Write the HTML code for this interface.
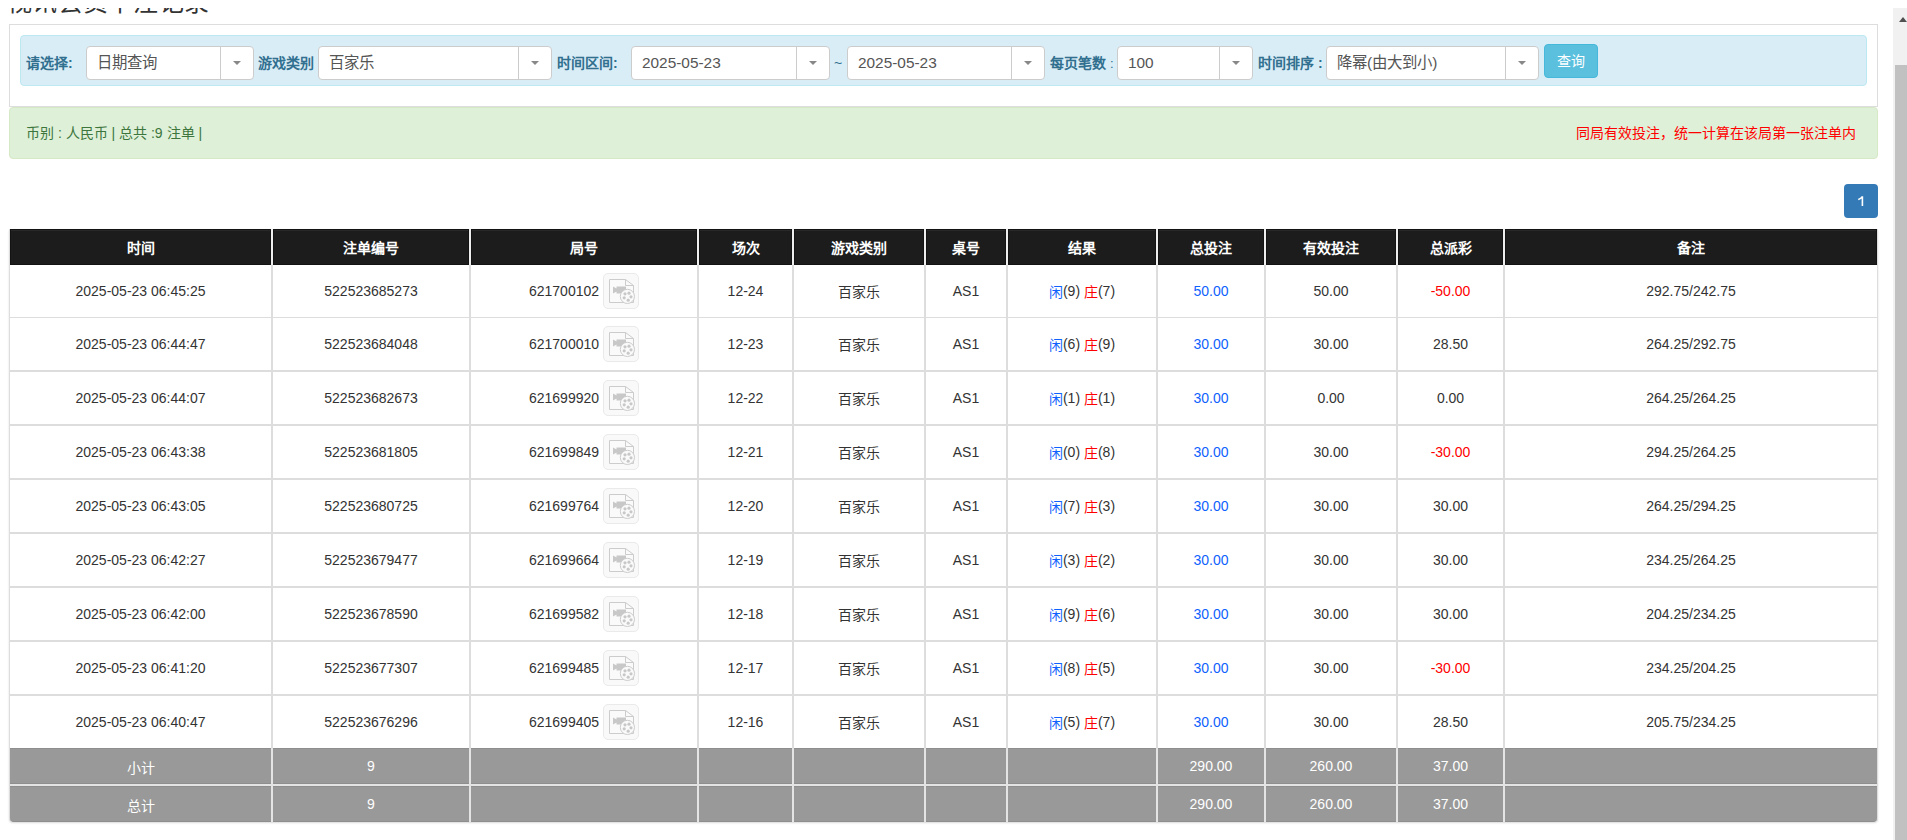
<!DOCTYPE html><html lang="zh-CN"><head><meta charset="utf-8"><style>
*{box-sizing:border-box;margin:0;padding:0}
html,body{width:1907px;height:840px;overflow:hidden;background:#fff}
body{position:relative;font-family:"Liberation Sans",sans-serif;font-size:14px;color:#333}
.a{position:absolute;white-space:nowrap}
.sel{position:absolute;top:46px;height:34px;background:#fff;border:1px solid #ccc;border-radius:4px}
.sel .dv{position:absolute;top:0;bottom:0;width:1px;background:#ccc}
.sel .ct{position:absolute;top:14px;width:0;height:0;border-left:4px solid transparent;border-right:4px solid transparent;border-top:4px solid #888}
.sel .tx{position:absolute;left:10px;top:0;line-height:32px;font-size:15.4px;color:#555}
.lb{position:absolute;top:46px;line-height:34px;font-weight:bold;color:#31708f;font-size:14px}
.th{position:absolute;top:229px;height:36px;background:#1c1c1c;border:1px solid #131313;box-shadow:inset 0 1px 0 #282828;color:#fff;font-weight:bold;display:flex;align-items:center;justify-content:center}
.td{position:absolute;display:flex;align-items:center;justify-content:center;color:#333}
.ft{position:absolute;height:36px;background:#999;border-top:1px solid #8e8e8e;border-bottom:1px solid #8e8e8e;color:#fff;display:flex;align-items:center;justify-content:center}
.ic{display:inline-block;width:36px;height:36px;margin-left:4px;border:1px solid #eaeaea;border-radius:5px;background:#f9f9f9;position:relative}
.ic svg{position:absolute;left:-1px;top:-1px}
.bl{color:#0f62fe}.rd{color:#f00}
</style></head><body>
<div class="a" style="left:7px;top:-15px;font-size:25px;letter-spacing:0.3px;line-height:34px;color:#333">视讯会员下注记录</div>
<div class="a" style="left:9px;top:24px;width:1869px;height:83px;border:1px solid #ddd"></div>
<div class="a" style="left:20px;top:35px;width:1847px;height:51px;background:#d9edf7;border:1px solid #bce8f1;border-radius:4px"></div>
<div class="lb" style="left:26px">请选择:</div>
<div class="lb" style="left:258px">游戏类别</div>
<div class="lb" style="left:557px">时间区间:</div>
<div class="lb" style="left:1050px">每页笔数 <span style="font-weight:normal;font-size:13px">:</span></div>
<div class="lb" style="left:1258px">时间排序 :</div>
<div class="lb" style="left:834px;font-weight:normal">~</div>
<div class="sel" style="left:86px;width:168px"><div class="tx">日期查询</div><div class="dv" style="left:133px"></div><div class="ct" style="left:146.0px"></div></div>
<div class="sel" style="left:318px;width:234px"><div class="tx">百家乐</div><div class="dv" style="left:199px"></div><div class="ct" style="left:212.0px"></div></div>
<div class="sel" style="left:631px;width:199px"><div class="tx">2025-05-23</div><div class="dv" style="left:164px"></div><div class="ct" style="left:177.0px"></div></div>
<div class="sel" style="left:847px;width:198px"><div class="tx">2025-05-23</div><div class="dv" style="left:163px"></div><div class="ct" style="left:176.0px"></div></div>
<div class="sel" style="left:1117px;width:136px"><div class="tx">100</div><div class="dv" style="left:101px"></div><div class="ct" style="left:114.0px"></div></div>
<div class="sel" style="left:1326px;width:213px"><div class="tx">降幂(由大到小)</div><div class="dv" style="left:178px"></div><div class="ct" style="left:191.0px"></div></div>
<div class="a" style="left:1544px;top:44px;width:54px;height:34px;background:#5bc0de;border:1px solid #46b8da;border-radius:4px;color:#fff;font-size:14px;line-height:32px;text-align:center">查询</div>
<div class="a" style="left:9px;top:107px;width:1869px;height:52px;background:#dff0d8;border:1px solid #d6e9c6;border-radius:4px"></div>
<div class="a" style="left:26px;top:107px;line-height:52px;color:#3c763d">币别 : 人民币 | 总共 :9 注单 |</div>
<div class="a" style="right:51px;top:107px;line-height:52px;color:#f00">同局有效投注，统一计算在该局第一张注单内</div>
<div class="a" style="left:1844px;top:184px;width:34px;height:34px;background:#337ab7;border-radius:4px"><svg width="34" height="34" style="position:absolute;left:0;top:0"><path d="M17.6 12.2H19.2V22H17.6V14.6Q16.4 15.6 14.2 16.2V14.8Q16.6 14 17.6 12.2Z" fill="#fff"/></svg></div>
<div class="a" style="left:9px;top:229px;width:1869px;height:593px;background:#ddd;box-shadow:0 1px 2px rgba(0,0,0,.15);border-radius:0 0 4px 4px"></div>
<div class="a" style="left:10px;top:229px;width:1867px;height:36px;background:#eee"></div>
<div class="th" style="left:10px;width:261px">时间</div>
<div class="th" style="left:273px;width:196px">注单编号</div>
<div class="th" style="left:471px;width:226px">局号</div>
<div class="th" style="left:699px;width:93px">场次</div>
<div class="th" style="left:794px;width:130px">游戏类别</div>
<div class="th" style="left:926px;width:80px">桌号</div>
<div class="th" style="left:1008px;width:148px">结果</div>
<div class="th" style="left:1158px;width:106px">总投注</div>
<div class="th" style="left:1266px;width:130px">有效投注</div>
<div class="th" style="left:1398px;width:105px">总派彩</div>
<div class="th" style="left:1505px;width:372px">备注</div>
<div class="td" style="left:10px;top:265px;width:261px;height:52px;background:#fff">2025-05-23 06:45:25</div>
<div class="td" style="left:273px;top:265px;width:196px;height:52px;background:#fff">522523685273</div>
<div class="td" style="left:471px;top:265px;width:226px;height:52px;background:#fff">621700102<span class="ic"><svg width="36" height="36" viewBox="0 0 36 36"><path d="M6.5 6.5H22.5L30.5 12.5V29.5H6.5Z" fill="#fafafa" stroke="#ccc" stroke-width="1"/><path d="M22.5 6.5V12.5H30.5" fill="none" stroke="#ccc" stroke-width="1"/><path d="M10 13.5L13.5 15.5V13.5H23V20.5H13.5V18.5L10 20.5Z" fill="#c8c8c8"/><circle cx="24.4" cy="23.4" r="7.1" fill="#fafafa" stroke="#ccc" stroke-width="1"/><circle cx="22" cy="20.8" r="1.6" fill="#c8c8c8"/><circle cx="26" cy="20.2" r="1.6" fill="#c8c8c8"/><circle cx="28" cy="23.8" r="1.6" fill="#c8c8c8"/><circle cx="25.2" cy="27.2" r="1.6" fill="#c8c8c8"/><circle cx="21.2" cy="24.8" r="1.6" fill="#c8c8c8"/></svg></span></div>
<div class="td" style="left:699px;top:265px;width:93px;height:52px;background:#fff">12-24</div>
<div class="td" style="left:794px;top:265px;width:130px;height:52px;background:#fff"><span style="position:relative;top:-0.5px">百家乐</span></div>
<div class="td" style="left:926px;top:265px;width:80px;height:52px;background:#fff">AS1</div>
<div class="td" style="left:1008px;top:265px;width:148px;height:52px;background:#fff"><span class="bl">闲</span>(9)&nbsp;<span class="rd">庄</span>(7)</div>
<div class="td" style="left:1158px;top:265px;width:106px;height:52px;background:#fff"><span class="bl">50.00</span></div>
<div class="td" style="left:1266px;top:265px;width:130px;height:52px;background:#fff">50.00</div>
<div class="td" style="left:1398px;top:265px;width:105px;height:52px;background:#fff"><span class="rd">-50.00</span></div>
<div class="td" style="left:1505px;top:265px;width:372px;height:52px;background:#fff">292.75/242.75</div>
<div class="td" style="left:10px;top:318px;width:261px;height:52px;background:#fff">2025-05-23 06:44:47</div>
<div class="td" style="left:273px;top:318px;width:196px;height:52px;background:#fff">522523684048</div>
<div class="td" style="left:471px;top:318px;width:226px;height:52px;background:#fff">621700010<span class="ic"><svg width="36" height="36" viewBox="0 0 36 36"><path d="M6.5 6.5H22.5L30.5 12.5V29.5H6.5Z" fill="#fafafa" stroke="#ccc" stroke-width="1"/><path d="M22.5 6.5V12.5H30.5" fill="none" stroke="#ccc" stroke-width="1"/><path d="M10 13.5L13.5 15.5V13.5H23V20.5H13.5V18.5L10 20.5Z" fill="#c8c8c8"/><circle cx="24.4" cy="23.4" r="7.1" fill="#fafafa" stroke="#ccc" stroke-width="1"/><circle cx="22" cy="20.8" r="1.6" fill="#c8c8c8"/><circle cx="26" cy="20.2" r="1.6" fill="#c8c8c8"/><circle cx="28" cy="23.8" r="1.6" fill="#c8c8c8"/><circle cx="25.2" cy="27.2" r="1.6" fill="#c8c8c8"/><circle cx="21.2" cy="24.8" r="1.6" fill="#c8c8c8"/></svg></span></div>
<div class="td" style="left:699px;top:318px;width:93px;height:52px;background:#fff">12-23</div>
<div class="td" style="left:794px;top:318px;width:130px;height:52px;background:#fff"><span style="position:relative;top:-0.5px">百家乐</span></div>
<div class="td" style="left:926px;top:318px;width:80px;height:52px;background:#fff">AS1</div>
<div class="td" style="left:1008px;top:318px;width:148px;height:52px;background:#fff"><span class="bl">闲</span>(6)&nbsp;<span class="rd">庄</span>(9)</div>
<div class="td" style="left:1158px;top:318px;width:106px;height:52px;background:#fff"><span class="bl">30.00</span></div>
<div class="td" style="left:1266px;top:318px;width:130px;height:52px;background:#fff">30.00</div>
<div class="td" style="left:1398px;top:318px;width:105px;height:52px;background:#fff"><span>28.50</span></div>
<div class="td" style="left:1505px;top:318px;width:372px;height:52px;background:#fff">264.25/292.75</div>
<div class="td" style="left:10px;top:372px;width:261px;height:52px;background:#fff">2025-05-23 06:44:07</div>
<div class="td" style="left:273px;top:372px;width:196px;height:52px;background:#fff">522523682673</div>
<div class="td" style="left:471px;top:372px;width:226px;height:52px;background:#fff">621699920<span class="ic"><svg width="36" height="36" viewBox="0 0 36 36"><path d="M6.5 6.5H22.5L30.5 12.5V29.5H6.5Z" fill="#fafafa" stroke="#ccc" stroke-width="1"/><path d="M22.5 6.5V12.5H30.5" fill="none" stroke="#ccc" stroke-width="1"/><path d="M10 13.5L13.5 15.5V13.5H23V20.5H13.5V18.5L10 20.5Z" fill="#c8c8c8"/><circle cx="24.4" cy="23.4" r="7.1" fill="#fafafa" stroke="#ccc" stroke-width="1"/><circle cx="22" cy="20.8" r="1.6" fill="#c8c8c8"/><circle cx="26" cy="20.2" r="1.6" fill="#c8c8c8"/><circle cx="28" cy="23.8" r="1.6" fill="#c8c8c8"/><circle cx="25.2" cy="27.2" r="1.6" fill="#c8c8c8"/><circle cx="21.2" cy="24.8" r="1.6" fill="#c8c8c8"/></svg></span></div>
<div class="td" style="left:699px;top:372px;width:93px;height:52px;background:#fff">12-22</div>
<div class="td" style="left:794px;top:372px;width:130px;height:52px;background:#fff"><span style="position:relative;top:-0.5px">百家乐</span></div>
<div class="td" style="left:926px;top:372px;width:80px;height:52px;background:#fff">AS1</div>
<div class="td" style="left:1008px;top:372px;width:148px;height:52px;background:#fff"><span class="bl">闲</span>(1)&nbsp;<span class="rd">庄</span>(1)</div>
<div class="td" style="left:1158px;top:372px;width:106px;height:52px;background:#fff"><span class="bl">30.00</span></div>
<div class="td" style="left:1266px;top:372px;width:130px;height:52px;background:#fff">0.00</div>
<div class="td" style="left:1398px;top:372px;width:105px;height:52px;background:#fff"><span>0.00</span></div>
<div class="td" style="left:1505px;top:372px;width:372px;height:52px;background:#fff">264.25/264.25</div>
<div class="td" style="left:10px;top:426px;width:261px;height:52px;background:#fff">2025-05-23 06:43:38</div>
<div class="td" style="left:273px;top:426px;width:196px;height:52px;background:#fff">522523681805</div>
<div class="td" style="left:471px;top:426px;width:226px;height:52px;background:#fff">621699849<span class="ic"><svg width="36" height="36" viewBox="0 0 36 36"><path d="M6.5 6.5H22.5L30.5 12.5V29.5H6.5Z" fill="#fafafa" stroke="#ccc" stroke-width="1"/><path d="M22.5 6.5V12.5H30.5" fill="none" stroke="#ccc" stroke-width="1"/><path d="M10 13.5L13.5 15.5V13.5H23V20.5H13.5V18.5L10 20.5Z" fill="#c8c8c8"/><circle cx="24.4" cy="23.4" r="7.1" fill="#fafafa" stroke="#ccc" stroke-width="1"/><circle cx="22" cy="20.8" r="1.6" fill="#c8c8c8"/><circle cx="26" cy="20.2" r="1.6" fill="#c8c8c8"/><circle cx="28" cy="23.8" r="1.6" fill="#c8c8c8"/><circle cx="25.2" cy="27.2" r="1.6" fill="#c8c8c8"/><circle cx="21.2" cy="24.8" r="1.6" fill="#c8c8c8"/></svg></span></div>
<div class="td" style="left:699px;top:426px;width:93px;height:52px;background:#fff">12-21</div>
<div class="td" style="left:794px;top:426px;width:130px;height:52px;background:#fff"><span style="position:relative;top:-0.5px">百家乐</span></div>
<div class="td" style="left:926px;top:426px;width:80px;height:52px;background:#fff">AS1</div>
<div class="td" style="left:1008px;top:426px;width:148px;height:52px;background:#fff"><span class="bl">闲</span>(0)&nbsp;<span class="rd">庄</span>(8)</div>
<div class="td" style="left:1158px;top:426px;width:106px;height:52px;background:#fff"><span class="bl">30.00</span></div>
<div class="td" style="left:1266px;top:426px;width:130px;height:52px;background:#fff">30.00</div>
<div class="td" style="left:1398px;top:426px;width:105px;height:52px;background:#fff"><span class="rd">-30.00</span></div>
<div class="td" style="left:1505px;top:426px;width:372px;height:52px;background:#fff">294.25/264.25</div>
<div class="td" style="left:10px;top:480px;width:261px;height:52px;background:#fff">2025-05-23 06:43:05</div>
<div class="td" style="left:273px;top:480px;width:196px;height:52px;background:#fff">522523680725</div>
<div class="td" style="left:471px;top:480px;width:226px;height:52px;background:#fff">621699764<span class="ic"><svg width="36" height="36" viewBox="0 0 36 36"><path d="M6.5 6.5H22.5L30.5 12.5V29.5H6.5Z" fill="#fafafa" stroke="#ccc" stroke-width="1"/><path d="M22.5 6.5V12.5H30.5" fill="none" stroke="#ccc" stroke-width="1"/><path d="M10 13.5L13.5 15.5V13.5H23V20.5H13.5V18.5L10 20.5Z" fill="#c8c8c8"/><circle cx="24.4" cy="23.4" r="7.1" fill="#fafafa" stroke="#ccc" stroke-width="1"/><circle cx="22" cy="20.8" r="1.6" fill="#c8c8c8"/><circle cx="26" cy="20.2" r="1.6" fill="#c8c8c8"/><circle cx="28" cy="23.8" r="1.6" fill="#c8c8c8"/><circle cx="25.2" cy="27.2" r="1.6" fill="#c8c8c8"/><circle cx="21.2" cy="24.8" r="1.6" fill="#c8c8c8"/></svg></span></div>
<div class="td" style="left:699px;top:480px;width:93px;height:52px;background:#fff">12-20</div>
<div class="td" style="left:794px;top:480px;width:130px;height:52px;background:#fff"><span style="position:relative;top:-0.5px">百家乐</span></div>
<div class="td" style="left:926px;top:480px;width:80px;height:52px;background:#fff">AS1</div>
<div class="td" style="left:1008px;top:480px;width:148px;height:52px;background:#fff"><span class="bl">闲</span>(7)&nbsp;<span class="rd">庄</span>(3)</div>
<div class="td" style="left:1158px;top:480px;width:106px;height:52px;background:#fff"><span class="bl">30.00</span></div>
<div class="td" style="left:1266px;top:480px;width:130px;height:52px;background:#fff">30.00</div>
<div class="td" style="left:1398px;top:480px;width:105px;height:52px;background:#fff"><span>30.00</span></div>
<div class="td" style="left:1505px;top:480px;width:372px;height:52px;background:#fff">264.25/294.25</div>
<div class="td" style="left:10px;top:534px;width:261px;height:52px;background:#fff">2025-05-23 06:42:27</div>
<div class="td" style="left:273px;top:534px;width:196px;height:52px;background:#fff">522523679477</div>
<div class="td" style="left:471px;top:534px;width:226px;height:52px;background:#fff">621699664<span class="ic"><svg width="36" height="36" viewBox="0 0 36 36"><path d="M6.5 6.5H22.5L30.5 12.5V29.5H6.5Z" fill="#fafafa" stroke="#ccc" stroke-width="1"/><path d="M22.5 6.5V12.5H30.5" fill="none" stroke="#ccc" stroke-width="1"/><path d="M10 13.5L13.5 15.5V13.5H23V20.5H13.5V18.5L10 20.5Z" fill="#c8c8c8"/><circle cx="24.4" cy="23.4" r="7.1" fill="#fafafa" stroke="#ccc" stroke-width="1"/><circle cx="22" cy="20.8" r="1.6" fill="#c8c8c8"/><circle cx="26" cy="20.2" r="1.6" fill="#c8c8c8"/><circle cx="28" cy="23.8" r="1.6" fill="#c8c8c8"/><circle cx="25.2" cy="27.2" r="1.6" fill="#c8c8c8"/><circle cx="21.2" cy="24.8" r="1.6" fill="#c8c8c8"/></svg></span></div>
<div class="td" style="left:699px;top:534px;width:93px;height:52px;background:#fff">12-19</div>
<div class="td" style="left:794px;top:534px;width:130px;height:52px;background:#fff"><span style="position:relative;top:-0.5px">百家乐</span></div>
<div class="td" style="left:926px;top:534px;width:80px;height:52px;background:#fff">AS1</div>
<div class="td" style="left:1008px;top:534px;width:148px;height:52px;background:#fff"><span class="bl">闲</span>(3)&nbsp;<span class="rd">庄</span>(2)</div>
<div class="td" style="left:1158px;top:534px;width:106px;height:52px;background:#fff"><span class="bl">30.00</span></div>
<div class="td" style="left:1266px;top:534px;width:130px;height:52px;background:#fff">30.00</div>
<div class="td" style="left:1398px;top:534px;width:105px;height:52px;background:#fff"><span>30.00</span></div>
<div class="td" style="left:1505px;top:534px;width:372px;height:52px;background:#fff">234.25/264.25</div>
<div class="td" style="left:10px;top:588px;width:261px;height:52px;background:#fff">2025-05-23 06:42:00</div>
<div class="td" style="left:273px;top:588px;width:196px;height:52px;background:#fff">522523678590</div>
<div class="td" style="left:471px;top:588px;width:226px;height:52px;background:#fff">621699582<span class="ic"><svg width="36" height="36" viewBox="0 0 36 36"><path d="M6.5 6.5H22.5L30.5 12.5V29.5H6.5Z" fill="#fafafa" stroke="#ccc" stroke-width="1"/><path d="M22.5 6.5V12.5H30.5" fill="none" stroke="#ccc" stroke-width="1"/><path d="M10 13.5L13.5 15.5V13.5H23V20.5H13.5V18.5L10 20.5Z" fill="#c8c8c8"/><circle cx="24.4" cy="23.4" r="7.1" fill="#fafafa" stroke="#ccc" stroke-width="1"/><circle cx="22" cy="20.8" r="1.6" fill="#c8c8c8"/><circle cx="26" cy="20.2" r="1.6" fill="#c8c8c8"/><circle cx="28" cy="23.8" r="1.6" fill="#c8c8c8"/><circle cx="25.2" cy="27.2" r="1.6" fill="#c8c8c8"/><circle cx="21.2" cy="24.8" r="1.6" fill="#c8c8c8"/></svg></span></div>
<div class="td" style="left:699px;top:588px;width:93px;height:52px;background:#fff">12-18</div>
<div class="td" style="left:794px;top:588px;width:130px;height:52px;background:#fff"><span style="position:relative;top:-0.5px">百家乐</span></div>
<div class="td" style="left:926px;top:588px;width:80px;height:52px;background:#fff">AS1</div>
<div class="td" style="left:1008px;top:588px;width:148px;height:52px;background:#fff"><span class="bl">闲</span>(9)&nbsp;<span class="rd">庄</span>(6)</div>
<div class="td" style="left:1158px;top:588px;width:106px;height:52px;background:#fff"><span class="bl">30.00</span></div>
<div class="td" style="left:1266px;top:588px;width:130px;height:52px;background:#fff">30.00</div>
<div class="td" style="left:1398px;top:588px;width:105px;height:52px;background:#fff"><span>30.00</span></div>
<div class="td" style="left:1505px;top:588px;width:372px;height:52px;background:#fff">204.25/234.25</div>
<div class="td" style="left:10px;top:642px;width:261px;height:52px;background:#fff">2025-05-23 06:41:20</div>
<div class="td" style="left:273px;top:642px;width:196px;height:52px;background:#fff">522523677307</div>
<div class="td" style="left:471px;top:642px;width:226px;height:52px;background:#fff">621699485<span class="ic"><svg width="36" height="36" viewBox="0 0 36 36"><path d="M6.5 6.5H22.5L30.5 12.5V29.5H6.5Z" fill="#fafafa" stroke="#ccc" stroke-width="1"/><path d="M22.5 6.5V12.5H30.5" fill="none" stroke="#ccc" stroke-width="1"/><path d="M10 13.5L13.5 15.5V13.5H23V20.5H13.5V18.5L10 20.5Z" fill="#c8c8c8"/><circle cx="24.4" cy="23.4" r="7.1" fill="#fafafa" stroke="#ccc" stroke-width="1"/><circle cx="22" cy="20.8" r="1.6" fill="#c8c8c8"/><circle cx="26" cy="20.2" r="1.6" fill="#c8c8c8"/><circle cx="28" cy="23.8" r="1.6" fill="#c8c8c8"/><circle cx="25.2" cy="27.2" r="1.6" fill="#c8c8c8"/><circle cx="21.2" cy="24.8" r="1.6" fill="#c8c8c8"/></svg></span></div>
<div class="td" style="left:699px;top:642px;width:93px;height:52px;background:#fff">12-17</div>
<div class="td" style="left:794px;top:642px;width:130px;height:52px;background:#fff"><span style="position:relative;top:-0.5px">百家乐</span></div>
<div class="td" style="left:926px;top:642px;width:80px;height:52px;background:#fff">AS1</div>
<div class="td" style="left:1008px;top:642px;width:148px;height:52px;background:#fff"><span class="bl">闲</span>(8)&nbsp;<span class="rd">庄</span>(5)</div>
<div class="td" style="left:1158px;top:642px;width:106px;height:52px;background:#fff"><span class="bl">30.00</span></div>
<div class="td" style="left:1266px;top:642px;width:130px;height:52px;background:#fff">30.00</div>
<div class="td" style="left:1398px;top:642px;width:105px;height:52px;background:#fff"><span class="rd">-30.00</span></div>
<div class="td" style="left:1505px;top:642px;width:372px;height:52px;background:#fff">234.25/204.25</div>
<div class="td" style="left:10px;top:696px;width:261px;height:52px;background:#fff">2025-05-23 06:40:47</div>
<div class="td" style="left:273px;top:696px;width:196px;height:52px;background:#fff">522523676296</div>
<div class="td" style="left:471px;top:696px;width:226px;height:52px;background:#fff">621699405<span class="ic"><svg width="36" height="36" viewBox="0 0 36 36"><path d="M6.5 6.5H22.5L30.5 12.5V29.5H6.5Z" fill="#fafafa" stroke="#ccc" stroke-width="1"/><path d="M22.5 6.5V12.5H30.5" fill="none" stroke="#ccc" stroke-width="1"/><path d="M10 13.5L13.5 15.5V13.5H23V20.5H13.5V18.5L10 20.5Z" fill="#c8c8c8"/><circle cx="24.4" cy="23.4" r="7.1" fill="#fafafa" stroke="#ccc" stroke-width="1"/><circle cx="22" cy="20.8" r="1.6" fill="#c8c8c8"/><circle cx="26" cy="20.2" r="1.6" fill="#c8c8c8"/><circle cx="28" cy="23.8" r="1.6" fill="#c8c8c8"/><circle cx="25.2" cy="27.2" r="1.6" fill="#c8c8c8"/><circle cx="21.2" cy="24.8" r="1.6" fill="#c8c8c8"/></svg></span></div>
<div class="td" style="left:699px;top:696px;width:93px;height:52px;background:#fff">12-16</div>
<div class="td" style="left:794px;top:696px;width:130px;height:52px;background:#fff"><span style="position:relative;top:-0.5px">百家乐</span></div>
<div class="td" style="left:926px;top:696px;width:80px;height:52px;background:#fff">AS1</div>
<div class="td" style="left:1008px;top:696px;width:148px;height:52px;background:#fff"><span class="bl">闲</span>(5)&nbsp;<span class="rd">庄</span>(7)</div>
<div class="td" style="left:1158px;top:696px;width:106px;height:52px;background:#fff"><span class="bl">30.00</span></div>
<div class="td" style="left:1266px;top:696px;width:130px;height:52px;background:#fff">30.00</div>
<div class="td" style="left:1398px;top:696px;width:105px;height:52px;background:#fff"><span>28.50</span></div>
<div class="td" style="left:1505px;top:696px;width:372px;height:52px;background:#fff">205.75/234.25</div>
<div class="a" style="left:10px;top:748px;width:1867px;height:74px;background:#e4e4e4;border-radius:0 0 4px 4px"></div>
<div class="ft" style="left:10px;top:748px;width:261px;"><span style="position:relative;top:1px">小计</span></div>
<div class="ft" style="left:273px;top:748px;width:196px;">9</div>
<div class="ft" style="left:471px;top:748px;width:226px;"></div>
<div class="ft" style="left:699px;top:748px;width:93px;"></div>
<div class="ft" style="left:794px;top:748px;width:130px;"></div>
<div class="ft" style="left:926px;top:748px;width:80px;"></div>
<div class="ft" style="left:1008px;top:748px;width:148px;"></div>
<div class="ft" style="left:1158px;top:748px;width:106px;">290.00</div>
<div class="ft" style="left:1266px;top:748px;width:130px;">260.00</div>
<div class="ft" style="left:1398px;top:748px;width:105px;">37.00</div>
<div class="ft" style="left:1505px;top:748px;width:372px;"></div>
<div class="ft" style="left:10px;top:786px;width:261px;border-bottom-left-radius:4px;"><span style="position:relative;top:1px">总计</span></div>
<div class="ft" style="left:273px;top:786px;width:196px;">9</div>
<div class="ft" style="left:471px;top:786px;width:226px;"></div>
<div class="ft" style="left:699px;top:786px;width:93px;"></div>
<div class="ft" style="left:794px;top:786px;width:130px;"></div>
<div class="ft" style="left:926px;top:786px;width:80px;"></div>
<div class="ft" style="left:1008px;top:786px;width:148px;"></div>
<div class="ft" style="left:1158px;top:786px;width:106px;">290.00</div>
<div class="ft" style="left:1266px;top:786px;width:130px;">260.00</div>
<div class="ft" style="left:1398px;top:786px;width:105px;">37.00</div>
<div class="ft" style="left:1505px;top:786px;width:372px;border-bottom-right-radius:4px;"></div>
<div class="a" style="left:1893px;top:8px;width:14px;height:832px;background:#f1f1f1"></div>
<div class="a" style="left:1895px;top:65px;width:12px;height:775px;background:#c1c1c1"></div>
<div class="a" style="left:1899px;top:17px;width:0;height:0;border-left:4.5px solid transparent;border-right:4.5px solid transparent;border-bottom:5px solid #505050"></div>
<div class="a" style="left:0;top:0;width:1907px;height:8px;background:#fff"></div>
</body></html>
